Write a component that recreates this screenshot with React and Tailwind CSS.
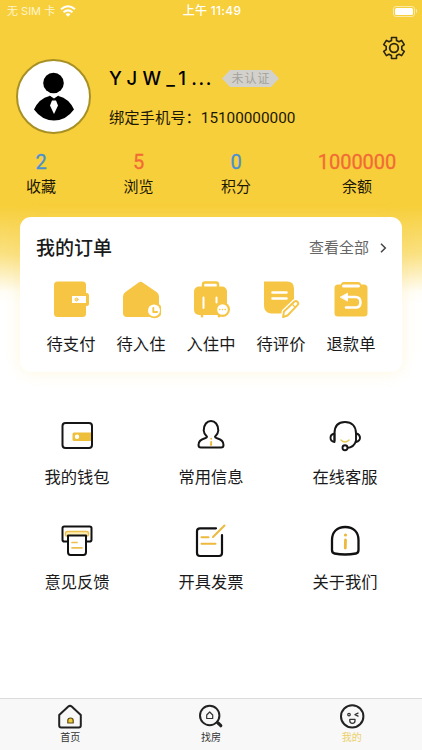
const stats = [
  { value: '2', label: '收藏', color: 'text-[#4a8fd0]', width: 'w-[82px]' },
  { value: '5', label: '浏览', color: 'text-[#f26b35]', width: 'w-[113px]' },
  { value: '0', label: '积分', color: 'text-[#4a8fd0]', width: 'w-[82px]' },
  { value: '1000000', label: '余额', color: 'text-[#f26b35]', width: 'w-[145px] pl-[15px]' },
]

function Svg({ size = 40, children, className }) {
  return (
    <svg width={size} height={size} viewBox={`0 0 ${size} ${size}`} fill="none" strokeLinecap="round" strokeLinejoin="round" className={className}>
      {children}
    </svg>
  )
}

function PayIcon() {
  return (
    <Svg>
      <rect x="3" y="2.500" width="32" height="35.500" rx="3.500" fill="#f6c544" />
      <rect x="19" y="14" width="19" height="13" rx="2.500" fill="#f6c544" />
      <rect x="21" y="17" width="14" height="7" fill="#fff" />
      <circle cx="25.500" cy="20.500" r="1.500" fill="#fbe2a2" stroke="#f6c544" />
    </Svg>
  )
}

function CheckInIcon() {
  return (
    <Svg>
      <path d="M2 17.500q0-3 2.500-4.600L18 3.300q1.500-1.200 3.200 0l14.300 9.600q2.500 1.600 2.500 4.600v16.500q0 4-4 4H6q-4 0-4-4z" fill="#f6c544" />
      <circle cx="33.500" cy="31.500" r="7.800" fill="#f6c544" />
      <circle cx="33" cy="31.500" r="6" fill="#fff" />
      <path d="M32.300 29v4h3.700" stroke="#f6c544" strokeWidth="1.900" />
    </Svg>
  )
}

function LuggageIcon() {
  return (
    <Svg>
      <path d="M12 8V5.500q0-2 2-2h11q2 0 2 2V8" stroke="#f6c544" strokeWidth="2.500" />
      <rect x="3" y="7.500" width="33" height="28.500" rx="5" fill="#f6c544" />
      <path d="M11 36v1.200M28 36v1.200" stroke="#f6c544" strokeWidth="2.500" />
      <path d="M12.500 18.500v10.500M25.500 18.500v5" stroke="#fff" strokeWidth="2" />
      <circle cx="31.500" cy="30.500" r="7.500" fill="#f6c544" />
      <circle cx="31.500" cy="30.500" r="5.300" fill="#fff" />
      <path d="M28.800 30.500h.01M31.500 30.500h.01M34.200 30.500h.01" stroke="#f6c544" strokeWidth="1.600" />
    </Svg>
  )
}

function ReviewIcon() {
  return (
    <Svg>
      <path d="M3 2.500h23q7 0 7 7V24L23 34.500H10q-7-1-7-8z" fill="#f6c544" />
      <path d="M11.500 13.500h14M11.500 19.500h14" stroke="#fff" strokeWidth="2.600" />
      <path d="M22 38l1-5.500L33.500 22.500q1.500-1.200 3 .3t.2 3L26.500 36.500z" fill="#fff" stroke="#fff" strokeWidth="4.500" />
      <path d="M22 38l1-5.500L33.500 22.500q1.500-1.200 3 .3t.2 3L26.500 36.500z" fill="#fff" stroke="#f6c544" strokeWidth="1.900" />
      <path d="M31.500 25.500l2.500 2.500" stroke="#f6c544" strokeWidth="1.300" />
    </Svg>
  )
}

function RefundIcon() {
  return (
    <Svg>
      <rect x="3.500" y="5.500" width="33" height="32" rx="3.500" fill="#f6c544" />
      <rect x="10" y="3" width="20" height="7" rx="3" fill="#f6c544" />
      <rect x="11" y="5.500" width="18" height="3" rx="1.500" fill="#fff" />
      <path d="M16 18h8.500q5 0 5 5.300t-5 5.200H15" stroke="#fff" strokeWidth="2.600" />
      <path d="M9.500 18l7-3.800v7.600z" fill="#fff" stroke="#fff" strokeWidth=".8" />
    </Svg>
  )
}

function WalletIcon() {
  return (
    <Svg>
      <path d="M35 16.500H17q-1.500 0-1.500 1.500v5.500q0 1.500 1.500 1.500h18z" fill="#edbf3a" />
      <circle cx="20" cy="20.800" r="2.200" fill="#fff" />
      <rect x="5.500" y="7" width="29.500" height="25" rx="3" stroke="#161616" strokeWidth="2" />
    </Svg>
  )
}

function PersonIcon() {
  return (
    <Svg>
      <path d="M16 20.800c0-1-3-2-3.300-6.300C12.700 8.500 16 5 20 5s7.300 3.500 7.300 9.500c-.3 4.300-3.300 5.300-3.300 6.300q0 1 2 1.500c4 1 6.500 3 6.500 6.700q0 2.500-2.500 2.500H10q-2.500 0-2.500-2.500c0-3.700 2.500-5.700 6.500-6.700q2-.5 2-1.500z" stroke="#161616" strokeWidth="2" />
      <path d="M20.200 22.700h.01M20.200 26l-.2 3" stroke="#efb83c" strokeWidth="1.900" />
    </Svg>
  )
}

function ServiceIcon() {
  return (
    <Svg>
      <path d="M9.500 24.500V17.500C9.500 10 13.500 6 20 6S31 10 31 17.500v7q-1.500 7-9.500 7.500" stroke="#161616" strokeWidth="1.900" />
      <path d="M9.500 17.500q-4 .8-4 4.300t4 4.300zM31.500 17.500q3.500 1 3.500 4.300t-4 4.300" stroke="#161616" strokeWidth="1.900" />
      <circle cx="20" cy="31.800" r="2.500" fill="#fff" stroke="#161616" strokeWidth="1.900" />
      <path d="M16 24q4 4 8 0" stroke="#e7cc55" strokeWidth="1.400" />
    </Svg>
  )
}

function FeedbackIcon() {
  return (
    <Svg>
      <rect x="5.500" y="5.500" width="29" height="15" rx="1.800" stroke="#111" strokeWidth="2" />
      <rect x="8.500" y="10.500" width="23" height="4.500" rx="1.800" fill="#fff0b5" stroke="#edbf4d" strokeWidth="1.500" />
      <path d="M11 14.500h18V31q0 3-2.500 3H13.500Q11 34 11 31z" fill="#fff" stroke="#111" strokeWidth="2" />
      <path d="M15 21.500h5M15 26.800h10" stroke="#edbf4d" strokeWidth="1.700" />
    </Svg>
  )
}

function InvoiceIcon() {
  return (
    <Svg>
      <path d="M25 7.300H9q-3 0-3 3V32q0 3 3 3h19q3 0 3-3V14" stroke="#111" strokeWidth="2.200" />
      <path d="M33.500 4.500L22 16M10.500 16.300h7M10.500 22.800h14" stroke="#edb93f" strokeWidth="2" />
    </Svg>
  )
}

function AboutIcon() {
  return (
    <Svg>
      <path d="M7 19C7 11 12 6 20.200 6S33.500 11 33.500 19v10q0 3-2.500 3.500-11 2-21.500 0Q7 32 7 29z" stroke="#111" strokeWidth="2.300" />
      <circle cx="20.500" cy="14" r="1.600" fill="#efb83c" />
      <path d="M20.500 19l-.2 8" stroke="#efb83c" strokeWidth="2.800" />
    </Svg>
  )
}

function HomeIcon() {
  return (
    <Svg size={28}>
      <path d="M3.200 13L12.300 4.600q1.700-1.500 3.400 0L24.800 13v10.500q0 2-2 2H5.200q-2 0-2-2z" stroke="#222" strokeWidth="2" />
      <path d="M11.800 21v-2.500q0-2.500 2.700-2.500t2.700 2.500V21z" fill="#f3cb38" stroke="#5c4c18" strokeWidth="1.200" />
    </Svg>
  )
}

function FindIcon() {
  return (
    <Svg size={28}>
      <circle cx="12.700" cy="13.500" r="9.700" stroke="#222" strokeWidth="2" />
      <path d="M19.800 20.500l1.500 1.300" stroke="#222" strokeWidth="2" />
      <path d="M21.500 21.300l2.300 2.400" stroke="#222" strokeWidth="3.200" />
      <path d="M9.700 13l3-3 3 3v3.500h-6z" stroke="#333" strokeWidth="1.200" />
    </Svg>
  )
}

function FaceIcon() {
  return (
    <Svg size={28}>
      <circle cx="14.200" cy="14.400" r="11.200" stroke="#222" strokeWidth="2" />
      <circle cx="11" cy="12.600" r="1.300" stroke="#333" strokeWidth="1.200" />
      <path d="M20 11.100L17 12.600l3 1.500M11.800 17.300h5.200v1.500q0 2.500-2.600 2.500t-2.600-2.500z" stroke="#333" strokeWidth="1.300" />
    </Svg>
  )
}

const orders = [
  { label: '待支付', icon: PayIcon },
  { label: '待入住', icon: CheckInIcon },
  { label: '入住中', icon: LuggageIcon },
  { label: '待评价', icon: ReviewIcon },
  { label: '退款单', icon: RefundIcon },
]

const services = [
  { label: '我的钱包', icon: WalletIcon },
  { label: '常用信息', icon: PersonIcon },
  { label: '在线客服', icon: ServiceIcon },
  { label: '意见反馈', icon: FeedbackIcon },
  { label: '开具发票', icon: InvoiceIcon },
  { label: '关于我们', icon: AboutIcon },
]

const tabs = [
  { label: '首页', icon: HomeIcon },
  { label: '找房', icon: FindIcon },
  { label: '我的', icon: FaceIcon, active: true },
]

function StatusBar() {
  return (
    <div className="grid h-[22px] grid-cols-3 items-center pl-[7px] pr-[5px] text-[12px] leading-[22px] text-white">
      <div className="flex items-center gap-[5px]">
        <span className="whitespace-nowrap font-['Inter','Noto_Sans_CJK_SC',sans-serif] text-[11px] text-[#fff4cc]">无 SIM 卡</span>
        <svg width="16" height="12" viewBox="0 0 16 12" fill="none" stroke="#fff" strokeWidth="2">
          <path d="M1 4.300q7-6 14 0M3.500 7.300q4.500-3.800 9 0" />
          <path d="M5.500 9.300q2.500-2 5 0L8 11.800z" fill="#fff" stroke="none" />
        </svg>
      </div>
      <div className="text-center font-['Inter','Noto_Sans_CJK_SC',sans-serif] font-medium tracking-[0.3px]">上午 11:49</div>
      <div className="flex items-center justify-end gap-px">
        <div className="h-[11px] w-[22px] rounded-[3px] border border-[#fbe9a6] p-px">
          <div className="h-full rounded-[1.500px] bg-white" />
        </div>
        <div className="h-[4px] w-[1.500px] rounded-r bg-[#fbe9a6]" />
      </div>
    </div>
  )
}

function Profile() {
  return (
    <div className="flex h-[125px] pl-[16px] pr-[16px]">
      <div className="mt-[37px] flex size-[75px] shrink-0 items-center justify-center rounded-full border-2 border-[#a89024] bg-white">
        <svg width="42" height="50" viewBox="0 0 42 50">
          <circle cx="20.500" cy="11" r="10.300" fill="#000" />
          <path d="M1 37.500Q6 26.500 16.500 24L21 27.500l4.500-3.500Q36 26.500 41 37.500 33 48.500 21 48.500T1 37.500z" fill="#000" />
          <path d="M19 28.500h4l2 5L21 42l-4-8.500z" fill="#fff" />
          <path d="M16.500 23.500l4.500 3 4.500-3v5l-4.500-1-4.500 1z" fill="#000" />
        </svg>
      </div>
      <div className="ml-[18px] flex-1 pt-[43px]">
        <div className="flex h-[26px] items-center">
          <span className="w-[113px] whitespace-nowrap pt-px font-['Inter','Noto_Sans_CJK_SC',sans-serif] text-[18.500px] font-medium text-black">
            <span className="tracking-[5.300px]">YJW_1</span>
            <span className="tracking-[1.700px]">...</span>
          </span>
          <svg width="57" height="17" viewBox="0 0 57 17">
            <path d="M0 8.500L8 0h41l8 8.500-8 8.500H8z" fill="#d3d1cb" />
            <text x="29" y="13" textAnchor="middle" fontSize="12" letterSpacing="1" fill="#a3a19b">未认证</text>
          </svg>
        </div>
        <div className="mt-[16px] text-[15.300px] leading-[22px] text-[#1c1808]">绑定手机号：15100000000</div>
      </div>
      <Svg size={24} className="mt-[14px] shrink-0">
        <path d="M9.500 1.500h5v3l2.500 1.300 2.600-1.400 2.700 4.200-2.500 1.700v3.400l2.500 1.700-2.700 4.200-2.600-1.400-2.500 1.300v3h-5v-3L7 18.200l-2.600 1.400-2.700-4.200 2.500-1.700v-3.400L1.700 8.600l2.700-4.200L7 5.800l2.500-1.300z" stroke="#2b2510" strokeWidth="1.600" />
        <circle cx="12" cy="12" r="4.300" stroke="#2b2510" strokeWidth="1.800" />
      </Svg>
    </div>
  )
}

export default function App() {
  return (
    <div className="flex h-[750px] w-[422px] flex-col overflow-hidden bg-white bg-[linear-gradient(180deg,#f7cf3b_0,#f7cf3b_206px,#fae182_254px,#fffdf6_292px,#fff_304px)] font-['Roboto','Noto_Sans_CJK_SC',sans-serif] text-[#1a1a1a]">
      <StatusBar />
      <Profile />

      {/* Counters */}
      <div className="flex h-[70px]">
        {stats.map((s) => (
          <div key={s.label} className={`flex shrink-0 flex-col items-center ${s.width}`}>
            <span className={`mt-[2px] text-[20px] leading-[26px] [-webkit-text-stroke:0.3px] ${s.color}`}>{s.value}</span>
            <span className="text-[15px] leading-[24px] text-[#1c1808]">{s.label}</span>
          </div>
        ))}
      </div>

      {/* Orders */}
      <section className="mx-[20px] h-[155px] shrink-0 rounded-[11px] bg-white shadow-[0_0_16px_rgba(247,207,59,0.18)]">
        <div className="flex h-[62px] items-center justify-between pl-[16px] pr-[15px]">
          <h2 className="pt-[2px] text-[19px] font-medium">我的订单</h2>
          <button className="flex items-center gap-[10px] text-[15px] text-[#666]">
            查看全部
            <svg width="8" height="10" viewBox="0 0 8 10" fill="none" stroke="#444" strokeWidth="1.500">
              <path d="M2 .8L6.300 5 2 9.200" />
            </svg>
          </button>
        </div>
        <div className="grid grid-cols-5 px-[16px]">
          {orders.map(({ label, icon: Icon }) => (
            <div key={label} className="flex flex-col items-center">
              <Icon />
              <span className="mt-[14px] text-[16.300px] leading-[24px]">{label}</span>
            </div>
          ))}
        </div>
      </section>

      {/* Services */}
      <div className="mt-[44px] grid grid-cols-3 gap-y-[31px] px-[10px]">
        {services.map(({ label, icon: Icon }) => (
          <div key={label} className="flex h-[74px] flex-col items-center">
            <Icon />
            <span className="mt-[10px] text-[16.300px] leading-[24px]">{label}</span>
          </div>
        ))}
      </div>

      <nav className="mt-auto grid h-[52px] grid-cols-3 border-t border-[#dcdcdc] bg-[#f8f8f8]">
        {tabs.map(({ label, icon: Icon, active }) => (
          <div key={label} className="flex flex-col items-center pt-[3px]">
            <Icon />
            <span className={`mt-px text-[10px] leading-[14px] ${active ? 'text-[#ecd06a]' : 'text-[#333]'}`}>{label}</span>
          </div>
        ))}
      </nav>
    </div>
  )
}
